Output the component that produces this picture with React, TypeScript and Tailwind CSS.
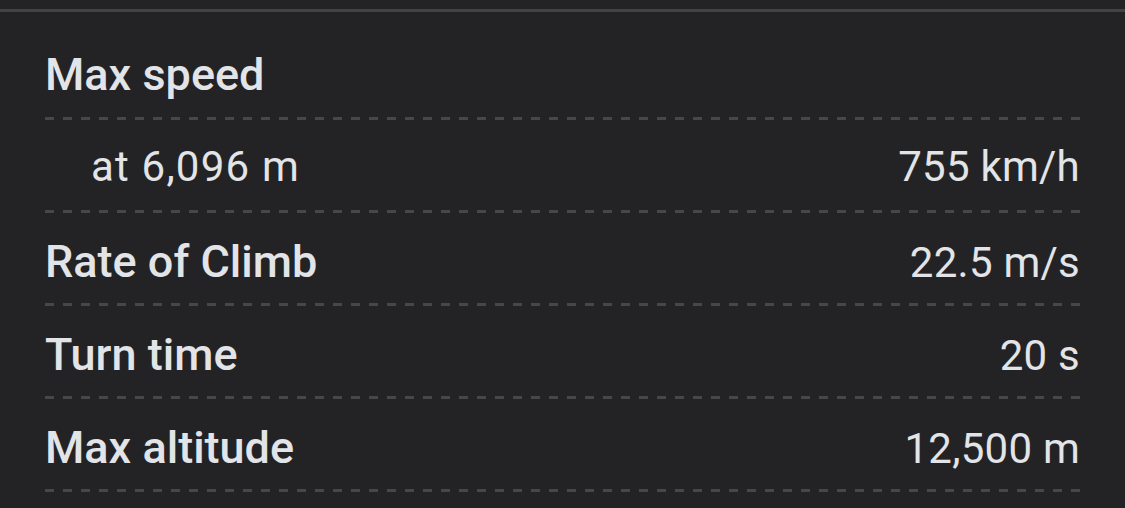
const ROWS = [
  { label: "at 6,096 m", value: "755 km/h", sub: true },
  { label: "Rate of Climb", value: "22.5 m/s" },
  { label: "Turn time", value: "20 s" },
  { label: "Max altitude", value: "12,500 m" },
];

function Dashes() {
  return (
    <div className="h-[3px] w-full bg-[repeating-linear-gradient(to_right,#474749_0px,#474749_9px,transparent_9px,transparent_18px)]" />
  );
}

export default function App() {
  return (
    <div className="min-h-[508px] w-full bg-[#232325] pt-[9px] font-['Roboto',sans-serif] text-[45px] leading-[52px] text-[#e2e4e8]">
      <div className="border-t-[3px] border-[#434345] px-[45px]">
        <div className="pt-[37px] pb-[16px] font-medium">Max speed</div>
        <Dashes />
        {ROWS.map((row) => (
          <div key={row.label}>
            <div
              className={
                row.sub
                  ? "flex h-[90px] items-baseline justify-between pt-[21px]"
                  : "flex h-[90px] items-baseline justify-between pt-[23px]"
              }
            >
              <span
                className={
                  row.sub
                    ? "pl-[46px] text-[42px] leading-[52px] font-normal tracking-[1.2px]"
                    : "text-[45px] leading-[52px] font-medium"
                }
              >
                {row.label}
              </span>
              <span className="text-[42px] leading-[52px] font-normal tracking-[0.25px]">
                {row.value}
              </span>
            </div>
            <Dashes />
          </div>
        ))}
      </div>
    </div>
  );
}
